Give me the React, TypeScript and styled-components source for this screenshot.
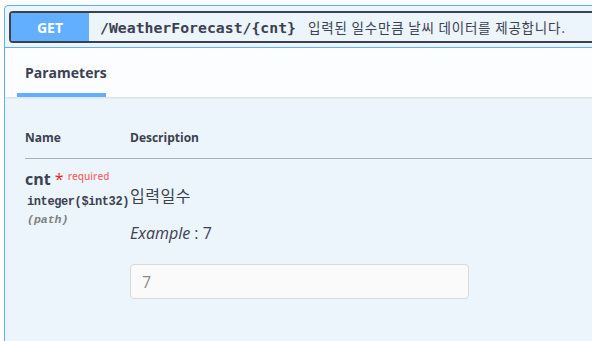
import React from 'react';
import styled, { createGlobalStyle } from 'styled-components';

const GlobalStyle = createGlobalStyle`
    html, body {
        margin: 0;
        padding: 0;
        background: #ffffff;
        overflow: hidden;
    }
    body {
        width: 592px;
        height: 341px;
        font-family: 'Open Sans', sans-serif;
        color: #3b4151;
    }
`;

const App: React.FC = () => {
    return (
        <>
            <GlobalStyle />
            <OpBlock>
                <Summary>
                    <Control>
                        <Method>GET</Method>
                        <Path>/WeatherForecast/{'{cnt}'}</Path>
                        <SummaryDesc>입력된 일수만큼 날씨 데이터를 제공합니다.</SummaryDesc>
                    </Control>
                </Summary>
                <SectionHeader>
                    <TabItem>Parameters</TabItem>
                </SectionHeader>
                <ParamsBody>
                    <ParamsGrid>
                        <HeadCell>Name</HeadCell>
                        <HeadCell>Description</HeadCell>
                        <NameCell>
                            <ParamName>
                                cnt
                                <Star>&nbsp;*</Star>
                                <Required>required</Required>
                            </ParamName>
                            <ParamType>integer($int32)</ParamType>
                            <ParamIn>(path)</ParamIn>
                        </NameCell>
                        <DescCell>
                            <Markdown>입력일수</Markdown>
                            <Example>
                                <i>Example</i> : 7
                            </Example>
                            <ValueInput defaultValue="7" />
                        </DescCell>
                    </ParamsGrid>
                </ParamsBody>
            </OpBlock>
        </>
    );
};

export default App;

const OpBlock = styled.div`
    margin: 5px 0 0 4px;
    width: 640px;
    min-height: 360px;
    border: 1px solid #61affe;
    border-radius: 4px;
    background: #ecf4fc;
`;

const Summary = styled.div`
    padding: 5px 4px 4px 4px;
    border-bottom: 1px solid #61affe;
`;

const Control = styled.div`
    display: flex;
    align-items: center;
    height: 32px;
    box-sizing: border-box;
    border: 2px solid #3b4151;
    border-radius: 4px;
    overflow: hidden;
`;

const Method = styled.span`
    flex: none;
    width: 78px;
    height: 28px;
    display: flex;
    align-items: center;
    justify-content: center;
    background: #61affe;
    color: #ffffff;
    font-family: 'Open Sans', sans-serif;
    font-weight: 700;
    font-size: 14px;
`;

const Path = styled.span`
    padding: 0 10px 0 11px;
    font-family: 'DejaVu Sans Mono', monospace;
    font-weight: 700;
    font-size: 14.8px;
    color: #3b4151;
    white-space: nowrap;
`;

const SummaryDesc = styled.span`
    padding-left: 2px;
    font-family: 'Noto Sans CJK KR', sans-serif;
    font-size: 13.5px;
    letter-spacing: 0.8px;
    color: #3b4151;
    white-space: nowrap;
`;

const SectionHeader = styled.div`
    display: flex;
    height: 49px;
    padding-left: 12px;
    background: rgba(255, 255, 255, 0.8);
    box-shadow: 0 1px 2px rgba(0, 0, 0, 0.1);
`;

const TabItem = styled.div`
    width: 89px;
    box-sizing: border-box;
    padding: 15px 0 0 8px;
    border-bottom: 4px solid #61affe;
    font-size: 14px;
    line-height: 20px;
    font-weight: 700;
    color: #3b4151;
`;

const ParamsBody = styled.div`
    padding: 21px 0 0 20px;
`;

const ParamsGrid = styled.div`
    display: grid;
    grid-template-columns: 105px 1fr;
`;

const HeadCell = styled.div`
    padding: 12px 0;
    font-size: 12px;
    line-height: 16px;
    font-weight: 700;
    color: #3b4151;
    border-bottom: 1px solid #a9aebb;
`;

const NameCell = styled.div`
    padding-top: 10px;
`;

const ParamName = styled.div`
    font-size: 16px;
    line-height: 20px;
    font-weight: 700;
    color: #3b4151;
    white-space: nowrap;
`;

const Star = styled.span`
    color: #ff2020;
    font-weight: 400;
`;

const Required = styled.span`
    position: relative;
    top: -5px;
    padding-left: 4px;
    font-size: 10px;
    font-weight: 600;
    color: rgba(255, 0, 0, 0.6);
`;

const ParamType = styled.div`
    padding: 3px 0 0 2px;
    font-family: 'Liberation Mono', monospace;
    font-size: 12px;
    line-height: 16px;
    letter-spacing: -0.4px;
    font-weight: 700;
    color: #3b4151;
`;

const ParamIn = styled.div`
    padding: 2px 0 0 2px;
    font-family: 'Liberation Mono', monospace;
    font-size: 11.5px;
    line-height: 16px;
    font-style: italic;
    font-weight: 700;
    color: #808080;
`;

const DescCell = styled.div`
    padding-top: 10px;
`;

const Markdown = styled.p`
    margin: 14px 0 0;
    font-family: 'Noto Sans CJK KR', sans-serif;
    font-size: 16px;
    line-height: 24px;
    letter-spacing: 0.5px;
    color: #3b4151;
`;

const Example = styled.p`
    margin: 15px 0 0;
    font-size: 16px;
    line-height: 22px;
    color: #3b4151;
`;

const ValueInput = styled.input`
    display: block;
    margin-top: 20px;
    width: 339px;
    height: 35px;
    box-sizing: border-box;
    padding: 0 11px;
    border: 1px solid #d9d9d9;
    border-radius: 4px;
    background: #fafafa;
    font-family: 'Open Sans', sans-serif;
    font-size: 16px;
    color: #8a8a8a;
    outline: none;
`;
